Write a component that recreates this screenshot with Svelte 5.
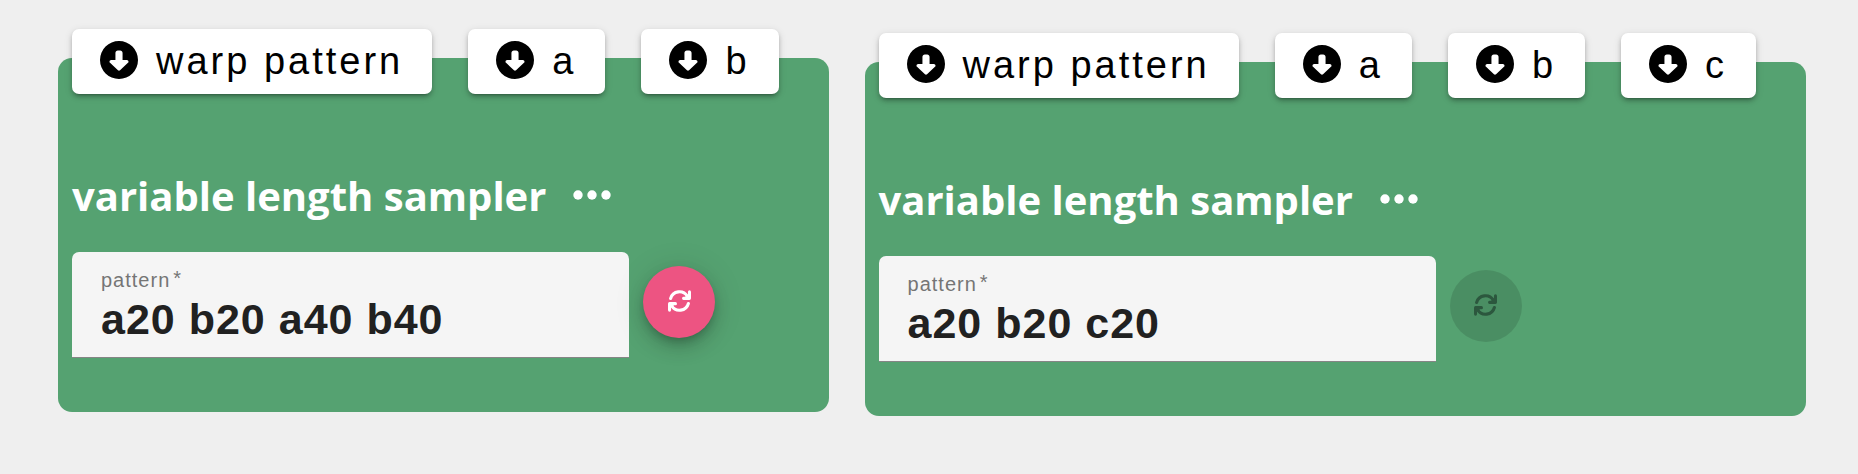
<script>
  let nodes = $state([
    { id: 'left', inlets: ['warp pattern', 'a', 'b'], pattern: 'a20 b20 a40 b40', pending: true },
    { id: 'right', inlets: ['warp pattern', 'a', 'b', 'c'], pattern: 'a20 b20 c20', pending: false }
  ]);
</script>

<main>
  {#each nodes as node (node.id)}
    <section class="node {node.id}">
      <div class="inlets">
        {#each node.inlets as inlet}
          <button class="inlet" type="button">
            <svg viewBox="0 0 512 512" aria-hidden="true">
              <path d="M256 0a256 256 0 1 0 0 512A256 256 0 1 0 256 0zM376.9 294.6L269.8 394.5c-3.8 3.5-8.7 5.5-13.8 5.5s-10.1-2-13.8-5.5L135.1 294.6c-4.5-4.2-7.1-10.1-7.1-16.3c0-12.3 10-22.3 22.3-22.3l57.7 0 0-96c0-17.7 14.3-32 32-32l32 0c17.7 0 32 14.3 32 32l0 96 57.7 0c12.3 0 22.3 10 22.3 22.3c0 6.2-2.6 12.1-7.1 16.3z" />
            </svg>
            <span>{inlet}</span>
          </button>
        {/each}
      </div>

      <header>
        <h2>variable length sampler</h2>
        <button class="more" type="button" aria-label="more">
          <svg viewBox="0 0 38 12" aria-hidden="true">
            <circle cx="5" cy="6" r="4.7" />
            <circle cx="19" cy="6" r="4.7" />
            <circle cx="33" cy="6" r="4.7" />
          </svg>
        </button>
      </header>

      <form onsubmit={(e) => e.preventDefault()}>
        <div class="field">
          <label for="pattern-{node.id}">pattern<sup>*</sup></label>
          <input id="pattern-{node.id}" type="text" required autocomplete="off" spellcheck="false" bind:value={node.pattern} />
        </div>
        <button class="apply" type="submit" aria-label="update" disabled={!node.pending}>
          <svg viewBox="0 0 512 482" aria-hidden="true">
            <g id="turn-{node.id}">
              <path class="arc" d="M58 186A204 204 0 0 1 430 136" />
              <path class="head" d="M478 38V182H346" />
              <path d="M478 50V182H350Z" />
            </g>
            <use href="#turn-{node.id}" transform="rotate(180 256 241)" />
          </svg>
        </button>
      </form>
    </section>
  {/each}
</main>

<style>
  :global(body) {
    background: #efefef;
  }

  main {
    display: flex;
    flex-wrap: wrap;
    align-items: flex-start;
    gap: 36px;
    padding: 58px 48px 58px 58px;
    font-family: 'Liberation Sans', Arial, sans-serif;
  }

  button {
    font: inherit;
    border: 0;
    cursor: pointer;
  }

  svg {
    display: block;
    fill: currentColor;
  }

  .node {
    box-sizing: border-box;
    padding: 0 50px 54px 14px;
    border-radius: 14px;
    background: #55a271;
  }

  .right {
    margin-top: 4px;
  }

  .inlets {
    display: flex;
    flex-wrap: wrap;
    gap: 36px;
    margin-top: -29px;
  }

  .inlet {
    display: flex;
    align-items: center;
    gap: 18px;
    height: 65px;
    padding: 0 29px 0 28px;
    border-radius: 7px;
    background: #fff;
    color: #000;
    font-size: 38px;
    letter-spacing: 3px;
    box-shadow:
      0 5px 2px -4px rgba(0, 0, 0, 0.2),
      0 3px 4px rgba(0, 0, 0, 0.2),
      0 2px 8px rgba(0, 0, 0, 0.12);
  }

  .inlet svg {
    width: 38px;
    height: 38px;
    margin-bottom: 4px;
  }

  header {
    display: flex;
    align-items: center;
    gap: 27px;
    margin-top: 73px;
    color: #fff;
  }

  h2 {
    margin: 0;
    font: 700 40px/58px 'Open Sans', sans-serif;
  }

  .more {
    padding: 0;
    background: none;
    color: #fff;
  }

  .more svg {
    width: 38px;
    height: 12px;
    margin-bottom: 2px;
  }

  form {
    display: flex;
    align-items: center;
    gap: 14px;
    margin-top: 27px;
  }

  .field {
    box-sizing: border-box;
    display: flex;
    flex-direction: column;
    width: 557px;
    height: 106px;
    padding: 16px 28px 0 29px;
    border-bottom: 1px solid #858585;
    border-radius: 7px 7px 0 0;
    background: #f5f5f5;
  }

  label {
    color: #757575;
    font-size: 20px;
    line-height: 24px;
    letter-spacing: 1px;
  }

  sup {
    margin-left: 3px;
    font-size: 20px;
    line-height: 0;
    vertical-align: 2px;
  }

  input {
    width: 100%;
    padding: 0;
    border: 0;
    outline: 0;
    background: none;
    color: #212121;
    font: 700 43px/54px 'Liberation Sans', Arial, sans-serif;
    letter-spacing: 1px;
  }

  .apply {
    display: grid;
    place-items: center;
    flex: none;
    width: 72px;
    height: 72px;
    margin-top: -6px;
    padding: 0;
    border-radius: 50%;
    background: #ed5482;
    color: #fff;
    box-shadow:
      0 5px 9px -2px rgba(0, 0, 0, 0.2),
      0 10px 18px rgba(0, 0, 0, 0.14),
      0 2px 32px rgba(0, 0, 0, 0.12);
  }

  .apply:disabled {
    background: rgba(0, 0, 0, 0.12);
    color: #2c573e;
    box-shadow: none;
    cursor: default;
  }

  .apply svg {
    width: 23px;
    height: 22px;
    margin-bottom: 2px;
  }

  .arc,
  .head {
    fill: none;
    stroke: currentColor;
    stroke-width: 68;
    stroke-linecap: round;
    stroke-linejoin: round;
  }
</style>
